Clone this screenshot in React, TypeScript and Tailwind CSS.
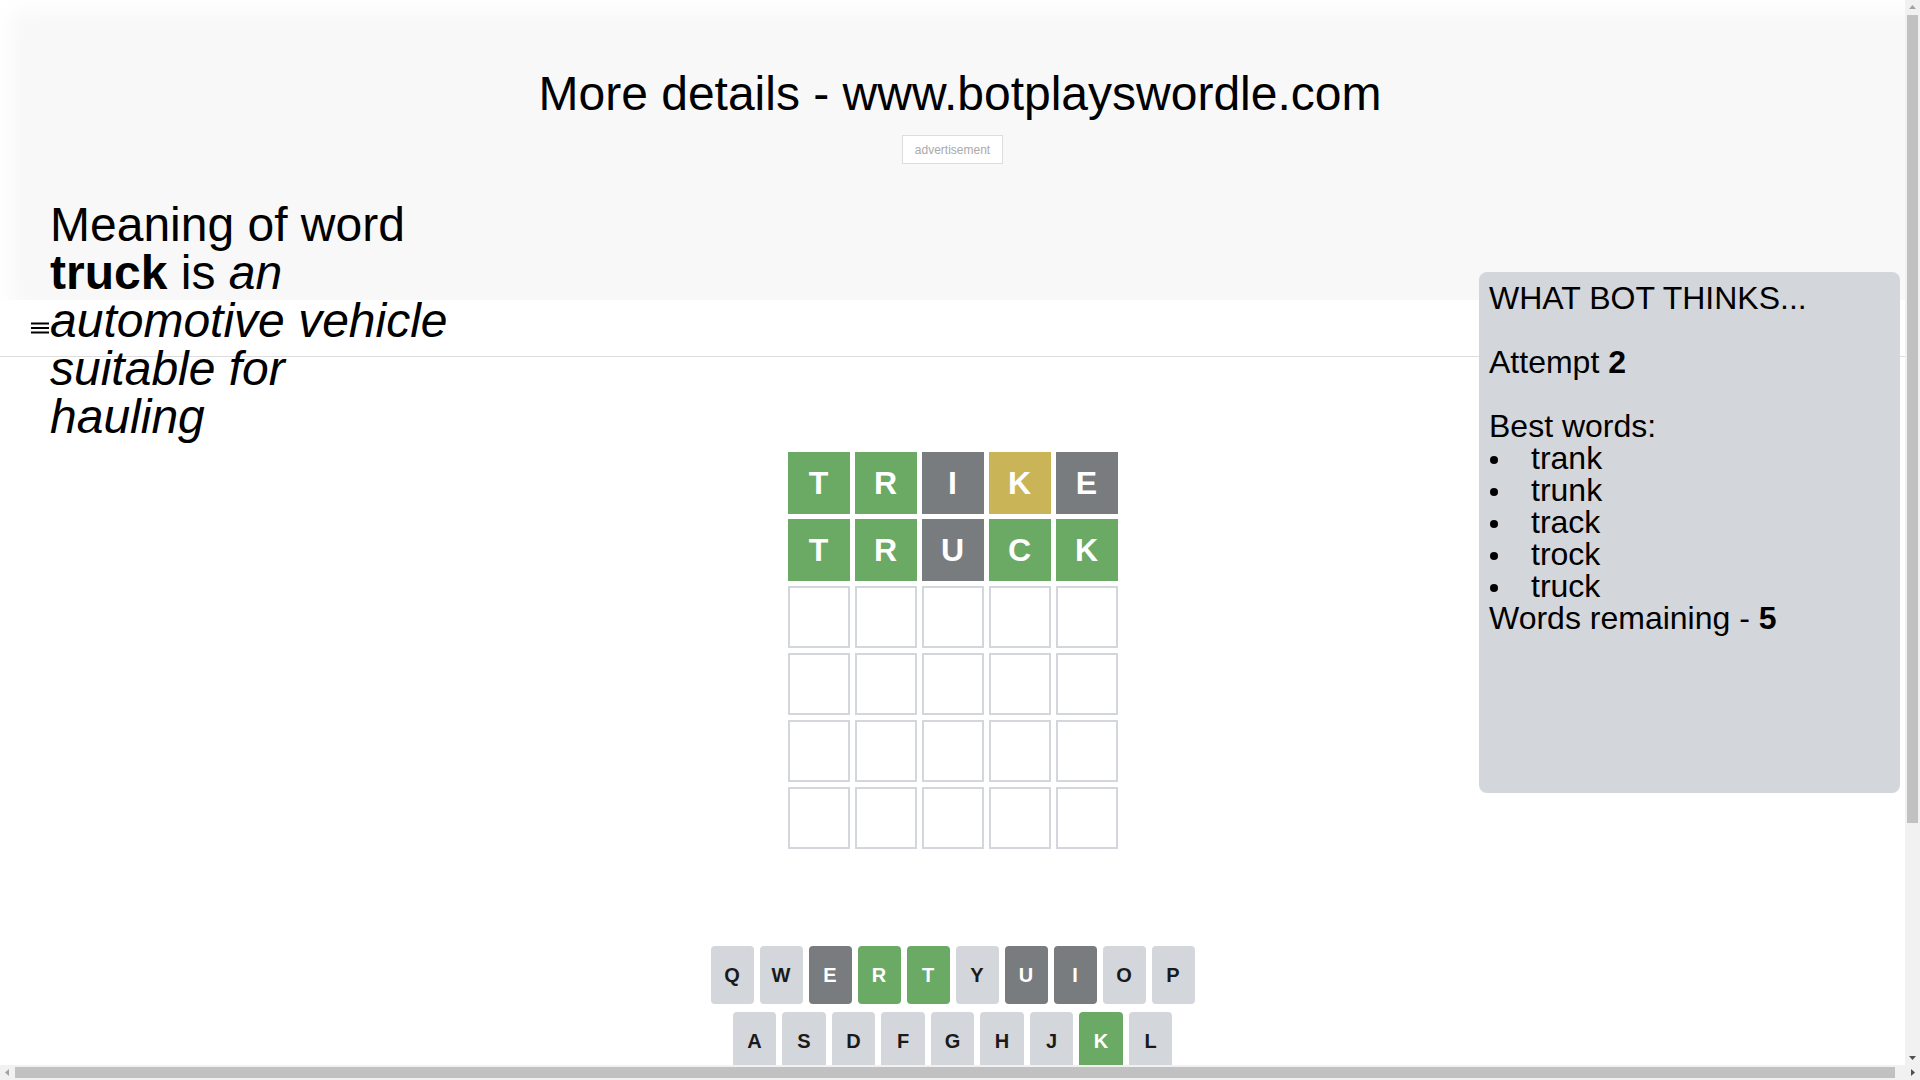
type TileState = "correct" | "present" | "absent" | "empty";

const guesses: { letter: string; state: TileState }[][] = [
  [
    { letter: "T", state: "correct" },
    { letter: "R", state: "correct" },
    { letter: "I", state: "absent" },
    { letter: "K", state: "present" },
    { letter: "E", state: "absent" },
  ],
  [
    { letter: "T", state: "correct" },
    { letter: "R", state: "correct" },
    { letter: "U", state: "absent" },
    { letter: "C", state: "correct" },
    { letter: "K", state: "correct" },
  ],
];

const emptyRow = Array.from({ length: 5 }, () => ({ letter: "", state: "empty" as TileState }));
const board = [...guesses, emptyRow, emptyRow, emptyRow, emptyRow];

const tileClass: Record<TileState, string> = {
  correct: "bg-[#6aaa64] text-white",
  present: "bg-[#c9b458] text-white",
  absent: "bg-[#787c7e] text-white",
  empty: "border-2 border-[#d3d6da] bg-white",
};

const keyState: Record<string, TileState> = {
  E: "absent",
  U: "absent",
  I: "absent",
  R: "correct",
  T: "correct",
  K: "correct",
  C: "correct",
};

const keyRows = [
  ["Q", "W", "E", "R", "T", "Y", "U", "I", "O", "P"],
  ["A", "S", "D", "F", "G", "H", "J", "K", "L"],
  ["ENTER", "Z", "X", "C", "V", "B", "N", "M", "⌫"],
];

const bestWords = ["trank", "trunk", "track", "trock", "truck"];

function Key({ label, middle }: { label: string; middle?: boolean }) {
  const state = keyState[label];
  const wide = label.length > 1 || label === "⌫";
  const color =
    state === "correct"
      ? "bg-[#6aaa64] text-white"
      : state === "absent"
        ? "bg-[#787c7e] text-white"
        : "bg-[#d3d6da] text-[#1a1a1b]";
  const size = wide ? "w-[65px] text-[12px]" : middle ? "w-[43.5px] text-[20px]" : "w-[43px] text-[20px]";
  return (
    <div className={`flex h-[58px] items-center justify-center rounded-[4px] font-bold ${color} ${size}`}>
      {label}
    </div>
  );
}

function BotPanel() {
  return (
    <div className="absolute right-[5px] top-[272px] h-[521px] w-[421px] rounded-[8px] bg-[#d3d6da] p-2.5 text-[32px] leading-8 text-black">
      <div>WHAT BOT THINKS...</div>
      <div className="h-8" />
      <div>
        Attempt <b>2</b>
      </div>
      <div className="h-8" />
      <div>Best words:</div>
      <ul>
        {bestWords.map((w) => (
          <li key={w} className="flex items-center">
            <span className="flex w-[42px] translate-y-[2px] items-center">
              <span className="ml-[1px] h-2 w-2 rounded-full bg-black" />
            </span>
            {w}
          </li>
        ))}
      </ul>
      <div>
        Words remaining - <b>5</b>
      </div>
    </div>
  );
}

// the browser's classic scrollbars, as they show in the screenshot
function Scrollbars() {
  return (
    <>
      <div className="fixed right-0 top-0 h-[1065px] w-[15px] bg-[#f1f1f1]">
        <svg className="absolute left-0 top-0" width="15" height="15" viewBox="0 0 15 15">
          <polygon points="4,9 11,9 7.5,5" fill="#a3a3a3" />
        </svg>
        <div className="absolute left-[2px] top-[15px] h-[808px] w-[11px] bg-[#c1c1c1]" />
        <svg className="absolute bottom-0 left-0" width="15" height="15" viewBox="0 0 15 15">
          <polygon points="4,6 11,6 7.5,10" fill="#505050" />
        </svg>
      </div>
      <div className="fixed bottom-0 left-0 h-[15px] w-full bg-[#f1f1f1]">
        <svg className="absolute left-0 top-0" width="15" height="15" viewBox="0 0 15 15">
          <polygon points="9,4 9,11 5,7.5" fill="#a3a3a3" />
        </svg>
        <div className="absolute left-[15px] top-[2px] h-[11px] w-[1880px] bg-[#c1c1c1]" />
        <svg className="absolute right-0 top-0" width="15" height="15" viewBox="0 0 15 15">
          <polygon points="6,4 6,11 10,7.5" fill="#505050" />
        </svg>
      </div>
    </>
  );
}

export default function App() {
  return (
    <div className="relative min-h-[1364px] w-[1905px] bg-white font-['Liberation_Sans',Arial,sans-serif] text-black">
      <div className="flex h-[300px] w-[1920px] flex-col items-center bg-[#f8f8f8] pt-[66px] shadow-[inset_10px_10px_22px_#ffffff]">
        <h1 className="text-[48px] leading-[55px]">More details - www.botplayswordle.com</h1>
        <div className="mr-[15px] mt-[14px] flex h-[29px] items-center border border-[#dddddd] bg-white px-3 text-[12px] text-[#aaaaaa]">
          advertisement
        </div>
      </div>

      <div className="flex h-[57px] items-center border-b border-[#dedede] pl-[31px]">
        <svg width="18" height="12" viewBox="0 0 18 12" aria-hidden>
          <rect x="0" y="0.5" width="18" height="2" fill="#000" />
          <rect x="0" y="5" width="18" height="2" fill="#000" />
          <rect x="0" y="9.5" width="18" height="2" fill="#000" />
        </svg>
      </div>

      <div className="flex flex-col items-center pt-[95px]">
        <div className="flex flex-col gap-[5px]">
          {board.map((row, r) => (
            <div key={r} className="flex gap-[5px]">
              {row.map((tile, c) => (
                <div
                  key={c}
                  className={`flex h-[62px] w-[62px] items-center justify-center text-[32px] font-bold leading-none ${tileClass[tile.state]}`}
                >
                  {tile.letter}
                </div>
              ))}
            </div>
          ))}
        </div>

        <div className="mt-[97px] flex flex-col items-center gap-2">
          {keyRows.map((row, i) => (
            <div key={i} className="flex gap-[6px]">
              {row.map((k) => (
                <Key key={k} label={k} middle={i === 1} />
              ))}
            </div>
          ))}
        </div>
      </div>

      <div className="absolute left-[50px] top-[201px] w-[400px] text-[48px] leading-[48px]">
        Meaning of word <b>truck</b> is <i>an automotive vehicle suitable for hauling</i>
      </div>

      <BotPanel />
      <Scrollbars />
    </div>
  );
}
